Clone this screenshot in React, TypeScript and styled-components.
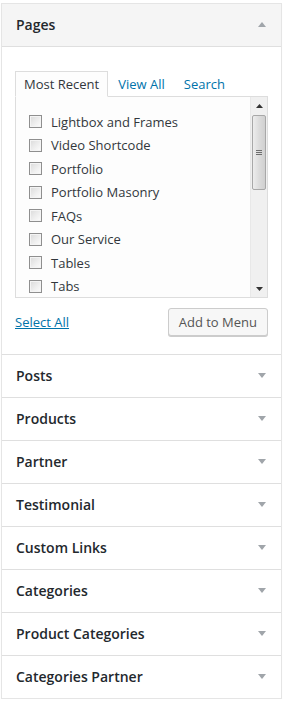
import React from 'react';
import styled, {createGlobalStyle} from 'styled-components';

const GlobalStyle = createGlobalStyle`
  html, body {
    margin: 0;
    padding: 0;
    background: #FFFFFF;
  }

  body {
    padding: 3px 2px 0 1px;
    font-family: "Open Sans", "Noto Sans", Arial, sans-serif;
    font-size: 13px;
    color: #32373C;
  }
`;

const Wrapper = styled.div`
  width: 281px;
  box-sizing: border-box;
  border: 1px solid #E5E5E5;
  box-shadow: 0 1px 1px rgba(0, 0, 0, 0.04);
  background: #FFFFFF;
`;

const Section = styled.div`
  border-bottom: 1px solid #DFDFDF;

  &:last-child {
    border-bottom: none;
  }
`;

const SectionTitle = styled.h3<{ $open?: boolean }>`
  margin: 0;
  display: flex;
  align-items: center;
  justify-content: space-between;
  box-sizing: border-box;
  padding: 10px 15px 11px 14px;
  line-height: 21px;
  font-size: 14px;
  font-weight: 600;
  color: #23282D;
  background: ${p => (p.$open ? '#F5F5F5' : '#FFFFFF')};
  border-bottom: ${p => (p.$open ? '1px solid #DFDFDF' : 'none')};
  height: ${p => (p.$open ? '43px' : '42px')};
`;

const SectionContent = styled.div`
  padding: 24px 13px 18px 13px;
`;

const Tabs = styled.ul`
  display: flex;
  margin: 0;
  padding: 0;
  list-style: none;
  height: 25px;
`;

const Tab = styled.li<{ $active?: boolean }>`
  box-sizing: border-box;
  height: 26px;
  padding: 0 8px;
  margin-right: 1px;
  line-height: 24px;
  font-size: 13px;
  color: ${p => (p.$active ? '#32373C' : '#0073AA')};
  border: 1px solid ${p => (p.$active ? '#DDDDDD' : 'transparent')};
  border-bottom: 1px solid ${p => (p.$active ? '#FDFDFD' : 'transparent')};
  background: ${p => (p.$active ? '#FDFDFD' : 'transparent')};
  position: relative;
  z-index: 1;
  cursor: pointer;
`;

const Panel = styled.div`
  display: flex;
  height: 202px;
  box-sizing: border-box;
  border: 1px solid #DDDDDD;
  background: #FDFDFD;
`;

const List = styled.ul`
  flex: 1;
  margin: 0;
  padding: 13px 0 0 13px;
  list-style: none;
  overflow: hidden;
`;

const Item = styled.li`
  display: flex;
  align-items: center;
  height: 23.5px;
  line-height: 18px;
  font-size: 13px;
  color: #32373C;
`;

const CheckBox = styled.span`
  width: 13px;
  height: 13px;
  box-sizing: border-box;
  margin-right: 9px;
  border: 1px solid #8F8F8F;
  background: linear-gradient(135deg, #DADADA 0%, #F0F0F0 60%, #FCFCFC 100%);
  box-shadow: inset 0 0 0 1px #F4F4F4;
  flex-shrink: 0;
`;

const Scrollbar = styled.div`
  width: 16px;
  display: flex;
  flex-direction: column;
  background: #F0F0F0;
  border-left: 1px solid #E8E8E8;
`;

const ScrollButton = styled.div`
  height: 17px;
  display: flex;
  align-items: center;
  justify-content: center;
`;

const Thumb = styled.div`
  margin: 1px 1px 0 1px;
  height: 75px;
  box-sizing: border-box;
  border: 1px solid #A8A8A8;
  border-radius: 2px;
  background: linear-gradient(90deg, #EDEDED 0%, #DCDCDC 50%, #D0D0D0 100%);
  display: flex;
  flex-direction: column;
  align-items: center;
  justify-content: center;
  gap: 1px;

  > span {
    width: 6px;
    height: 1px;
    background: #6E6E6E;
  }
`;

const Track = styled.div`
  flex: 1;
`;

const Footer = styled.div`
  display: flex;
  align-items: center;
  justify-content: space-between;
  margin-top: 10px;
`;

const SelectAll = styled.a`
  color: #0073AA;
  text-decoration: underline;
  font-size: 13px;
  line-height: 20px;
  cursor: pointer;
`;

const Button = styled.button`
  height: 28px;
  box-sizing: border-box;
  padding: 0 10px;
  font-family: "Open Sans", "Noto Sans", Arial, sans-serif;
  font-size: 13px;
  line-height: 26px;
  color: #555555;
  background: #F7F7F7;
  border: 1px solid #CCCCCC;
  border-radius: 3px;
  box-shadow: 0 1px 0 #CCCCCC;
  cursor: pointer;
`;

const Arrow = ({up}: { up?: boolean }) => (
    <svg width="8" height="5" viewBox="0 0 8 5">
        <path d={up ? 'M0 5 L4 0 L8 5 Z' : 'M0 0 L8 0 L4 5 Z'} fill="#A0A5AA"/>
    </svg>
);

const SmallArrow = ({up}: { up?: boolean }) => (
    <svg width="7" height="4" viewBox="0 0 7 4">
        <path d={up ? 'M0 4 L3.5 0 L7 4 Z' : 'M0 0 L7 0 L3.5 4 Z'} fill="#333333"/>
    </svg>
);

const pages = [
    'Lightbox and Frames',
    'Video Shortcode',
    'Portfolio',
    'Portfolio Masonry',
    'FAQs',
    'Our Service',
    'Tables',
    'Tabs',
    'Team',
    'Testimonials',
];

const closedSections = [
    'Posts',
    'Products',
    'Partner',
    'Testimonial',
    'Custom Links',
    'Categories',
    'Product Categories',
    'Categories Partner',
];

const App: React.FunctionComponent = () => {
    return (
        <>
            <GlobalStyle/>
            <Wrapper>
                <Section>
                    <SectionTitle $open>
                        Pages
                        <Arrow up/>
                    </SectionTitle>
                    <SectionContent>
                        <Tabs>
                            <Tab $active>Most Recent</Tab>
                            <Tab>View All</Tab>
                            <Tab>Search</Tab>
                        </Tabs>
                        <Panel>
                            <List>
                                {pages.map(p => (
                                    <Item key={p}>
                                        <CheckBox/>
                                        {p}
                                    </Item>
                                ))}
                            </List>
                            <Scrollbar>
                                <ScrollButton><SmallArrow up/></ScrollButton>
                                <Thumb><span/><span/><span/></Thumb>
                                <Track/>
                                <ScrollButton><SmallArrow/></ScrollButton>
                            </Scrollbar>
                        </Panel>
                        <Footer>
                            <SelectAll>Select All</SelectAll>
                            <Button>Add to Menu</Button>
                        </Footer>
                    </SectionContent>
                </Section>
                {closedSections.map(s => (
                    <Section key={s}>
                        <SectionTitle>
                            {s}
                            <Arrow/>
                        </SectionTitle>
                    </Section>
                ))}
            </Wrapper>
        </>
    );
};

export default App;
